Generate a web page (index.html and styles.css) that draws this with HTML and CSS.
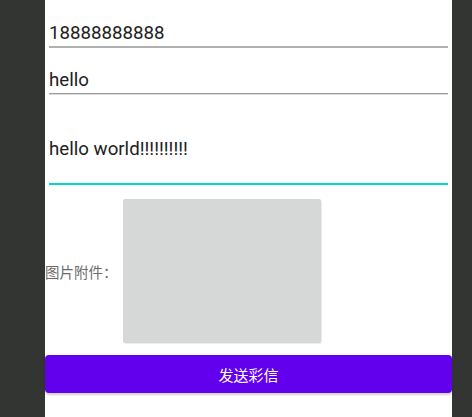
FILE: index.html
```html
<!DOCTYPE html>
<html lang="zh">
<head>
<meta charset="utf-8">
<link rel="stylesheet" href="styles.css">
</head>
<body>
<div class="side"></div>
<main class="screen">
  <div class="field field-phone">18888888888</div>
  <div class="field field-subject">hello</div>
  <div class="field field-body">hello world!!!!!!!!!!</div>
  <div class="attach">
    <span class="attach-label">图片附件：</span>
    <div class="attach-image"></div>
  </div>
  <button class="send">发送彩信</button>
</main>
<div class="side side-right"></div>
</body>
</html>
```

FILE: styles.css
```css
html, body {
  margin: 0;
  padding: 0;
  height: 100%;
}
body {
  display: flex;
  background: #333533;
  font-family: Roboto, "Noto Sans CJK SC", sans-serif;
  overflow: hidden;
}
.side {
  width: 45px;
  flex: none;
}
.side-right {
  width: 20px;
}
.screen {
  width: 407px;
  flex: none;
  background: #ffffff;
  display: flex;
  flex-direction: column;
}
.field {
  margin: 0 4px;
  font-size: 18.7px;
  line-height: 22px;
  color: #212121;
  white-space: nowrap;
}
.field-phone {
  padding: 22px 0 2px;
  border-bottom: 2px solid #b0b0b0;
}
.field-subject {
  padding: 21px 0 2px;
  border-bottom: 1px solid #9a9a9a;
  box-shadow: 0 1px 0 #dcdcdc;
  margin-bottom: 1px;
}
.field-body {
  padding: 43px 0 23px;
  border-bottom: 2px solid #03dac5;
}
.attach {
  display: flex;
  align-items: center;
  padding-top: 14px;
}
.attach-label {
  width: 78px;
  flex: none;
  font-family: "Noto Sans CJK SC", sans-serif;
  font-size: 14.5px;
  color: #6b6b6b;
  white-space: nowrap;
}
.attach-image {
  width: 198px;
  height: 144px;
  background: #d6d7d7;
  border-radius: 2px;
  box-shadow: 1px 1px 1px rgba(0, 0, 0, 0.08);
}
.send {
  margin-top: 12px;
  height: 38px;
  border: none;
  border-radius: 4px;
  background: #6200ee;
  color: #ffffff;
  font-family: "Noto Sans CJK SC", sans-serif;
  font-size: 15px;
  padding: 0;
  box-shadow: 0 2px 2px rgba(0, 0, 0, 0.18);
}
```
